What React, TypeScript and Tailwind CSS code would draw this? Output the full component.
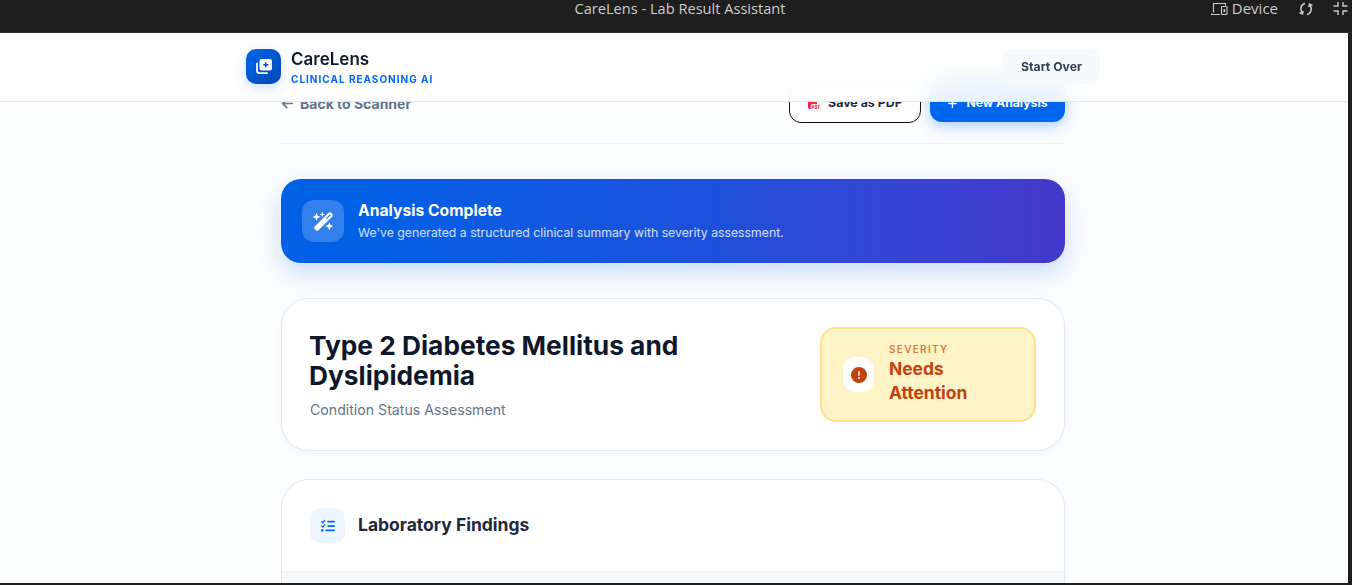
import React from 'react';
import { FaArrowLeft, FaCircleExclamation, FaFilePdf, FaListCheck, FaPlus, FaWandMagicSparkles } from 'react-icons/fa6';

const inter = { fontFamily: 'Inter, sans-serif' };

const DeviceIcon = () => (
  <svg width="17" height="14" viewBox="0 0 17 14" fill="none" stroke="currentColor" strokeWidth="1.1">
    <path d="M2.5 10.5V1.5h12V3.5" />
    <path d="M0.5 11.5V12.5H9" />
    <rect x="10.5" y="4.5" width="5.5" height="8" rx="0.7" />
    <rect x="12.5" y="7" width="1.6" height="3.2" fill="currentColor" stroke="none" />
  </svg>
);

const SyncIcon = () => (
  <svg width="14" height="14" viewBox="0 0 14 14" fill="none" stroke="currentColor" strokeWidth="1.5">
    <path d="M6 1.5C2 2.5 0.2 7 3.5 11.5" />
    <path d="M0.5 10.5l3 1.5.6-3.2" />
    <path d="M8 12.5c4-1 5.8-5.5 2.5-10" />
    <path d="M13.5 3.5l-3-1.5-.6 3.2" />
  </svg>
);

const CollapseIcon = () => (
  <svg width="15" height="15" viewBox="0 0 15 15" fill="none" stroke="currentColor" strokeWidth="1.4">
    <path d="M5 1v4H0.5M10 1v4h4.5M5 14v-4H0.5M10 14v-4h4.5" />
  </svg>
);

const LogoIcon = () => (
  <svg width="16" height="15" viewBox="0 0 16 15">
    <rect x="3.5" y="0" width="12.5" height="11.5" rx="2.2" fill="white" />
    <path d="M9.75 3.2v5M7.25 5.7h5" stroke="#0056d6" strokeWidth="1.6" fill="none" />
    <path d="M1 4.5v7a2.7 2.7 0 0 0 2.7 2.7H11" stroke="white" strokeWidth="1.8" fill="none" strokeLinecap="round" />
  </svg>
);

export default function App() {
  return (
    <div className="flex h-screen flex-col overflow-hidden bg-[#1e1e1e]" style={inter}>
      {/* Preview window bar */}
      <div className="relative flex h-[33px] shrink-0 justify-center border-b border-[#2e2e2e] text-[#cccccc]">
        <span className="ml-[8px] text-[14.6px] leading-[17px] [font-family:'Open_Sans',sans-serif]">CareLens - Lab Result Assistant</span>
        <div className="absolute top-[1px] right-[4px] flex items-center text-[#cccccc]">
          <DeviceIcon />
          <span className="mr-[21px] ml-[4px] text-[15px] leading-[15px] [font-family:'Open_Sans',sans-serif]">Device</span>
          <SyncIcon />
          <span className="ml-[20px] flex"><CollapseIcon /></span>
        </div>
      </div>

      <div className="relative mr-[4px] mb-[2px] min-h-0 flex-1 overflow-hidden bg-[#fbfcfe] pr-[2px]">
        {/* Sticky header */}
        <header className="absolute inset-x-0 top-0 z-10 h-[69px] border-b border-[#e5e7eb] bg-white/90 backdrop-blur-md">
          <div className="mx-auto flex h-full w-[854px] -translate-x-[1px] items-center justify-between pb-[2px]">
            <div className="flex items-center gap-[10px]">
              <div className="flex h-[35px] w-[35px] items-center justify-center rounded-[10px] bg-gradient-to-br from-[#0066ee] to-[#0047b3] shadow-[0_4px_12px_rgba(0,102,255,0.2)]">
                <LogoIcon />
              </div>
              <div className="pt-[2px]">
                <div className="text-[17px] leading-[22px] font-semibold text-[#0f172a]">CareLens</div>
                <div className="mt-[2px] text-[10px] leading-[14px] font-bold tracking-[1px] text-[#0066ff]">CLINICAL REASONING AI</div>
              </div>
            </div>
            <button className="h-[35px] w-[97px] rounded-[10px] bg-[#f6f9fd] pt-[2px] text-[12.2px] font-bold text-[#334155]">Start Over</button>
          </div>
        </header>

        {/* Scrolled page content */}
        <main className="mx-auto w-[784px]">
          <div className="flex h-[111px] items-end justify-between border-b border-[#f1f3f6] pb-[20px]">
            <div className="mb-[9px] flex items-center gap-[6px] text-[14px] font-bold text-[#64748b]">
              <FaArrowLeft size={13} />
              Back to Scanner
            </div>
            <div className="flex items-start gap-[9px]">
              <button className="flex h-[43px] w-[132px] items-center justify-center gap-[8px] rounded-[12px] border border-[#111111] bg-white pt-[3px] text-[12.4px] font-bold text-[#1e293b]">
                <FaFilePdf size={12} className="text-[#f0244f]" />
                Save as PDF
              </button>
              <button className="flex h-[42px] w-[135px] items-center justify-center gap-[8px] rounded-[12px] bg-[#0066ee] pt-[4px] text-[12.2px] font-bold text-white shadow-[0_4px_14px_rgba(0,102,255,0.3)]">
                <FaPlus size={11} />
                New Analysis
              </button>
            </div>
          </div>

          <section className="mt-[35px] flex h-[84px] items-center gap-[14px] rounded-[20px] bg-gradient-to-r from-[#0060e6] from-[10%] via-[#1b50da] via-[55%] to-[#4338ca] px-[21px] shadow-[0_10px_25px_rgba(0,102,255,0.2)]">
            <div className="flex h-[42px] w-[42px] items-center justify-center rounded-[12px] bg-white/20 text-white">
              <FaWandMagicSparkles size={21} />
            </div>
            <div className="pt-[1px]">
              <div className="text-[15.7px] leading-[20px] font-bold text-white">Analysis Complete</div>
              <div className="mt-[3px] text-[12.25px] leading-[18px] text-white/80">We've generated a structured clinical summary with severity assessment.</div>
            </div>
          </section>

          <section className="mt-[35px] flex h-[153px] items-center justify-between rounded-[28px] border border-[#e2e8f0] bg-white pr-[28px] pl-[28px] shadow-[0_2px_6px_rgba(0,0,0,0.03)]">
            <div className="w-[440px]">
              <h1 className="mt-[2px] -ml-[1px] text-[26.3px] leading-[30px] font-bold text-[#0f172a]">Type 2 Diabetes Mellitus and Dyslipidemia</h1>
              <p className="mt-[9px] text-[14.15px] leading-[20px] text-[#64748b]">Condition Status Assessment</p>
            </div>
            <div className="flex h-[95px] w-[216px] items-center gap-[14px] rounded-[16px] border-2 border-[#fde08a] bg-[#fef3c7] pl-[21px]">
              <div className="flex h-[35px] w-[31px] items-center justify-center rounded-[12px] bg-white text-[#c2410c]">
                <FaCircleExclamation size={16} />
              </div>
              <div className="-mt-[2px] ml-[1px]">
                <div className="text-[10px] leading-[14px] font-semibold tracking-[1.3px] text-[#d97b3f]">SEVERITY</div>
                <div className="mt-[1px] text-[17.4px] leading-[24px] font-bold text-[#c2410c]">Needs<br />Attention</div>
              </div>
            </div>
          </section>

          <section className="mt-[28px] rounded-t-[28px] border border-b-0 border-[#e2e8f0] bg-white">
            <div className="flex h-[91px] items-center gap-[13px] px-[28px]">
              <div className="flex h-[35px] w-[35px] items-center justify-center rounded-[10px] bg-[#edf5ff] text-[#0066ff]">
                <FaListCheck size={14} />
              </div>
              <h2 className="text-[17.5px] font-bold text-[#1e293b]">Laboratory Findings</h2>
            </div>
            <div className="h-[40px] border-t border-[#f1f5f9] bg-[#f6f9fc]" />
          </section>
        </main>
      </div>
    </div>
  );
}
